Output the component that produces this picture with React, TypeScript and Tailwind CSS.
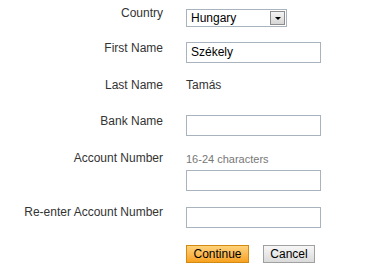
import React from 'react';

const Label: React.FC<{ children: React.ReactNode }> = ({ children }) => (
  <div className="w-[163px] shrink-0 text-right text-[12px] leading-[14px] text-[#333]">{children}</div>
);

const TextBox: React.FC<{ value?: string; className?: string }> = ({ value, className }) => (
  <div
    className={`w-[135px] h-[21px] border border-[#a9b3bd] bg-white px-[4px] text-[12px] leading-[19px] text-black ${className ?? ''}`}
  >
    {value}
  </div>
);

export default function App() {
  return (
    <div className="w-[375px] h-[278px] bg-white font-['Liberation_Sans',Arial,sans-serif]">
      <div className="flex flex-col pt-[6px]">
        {/* country */}
        <div className="flex gap-[23px]">
          <Label>Country</Label>
          <div className="mt-[3px] flex h-[18px] w-[101px] items-center justify-between border border-[#a9b3bd] bg-white pl-[4px] pr-[1px]">
            <span className="text-[12px] leading-[14px] text-black">Hungary</span>
            <span className="flex h-[14px] w-[15px] items-center justify-center border border-[#8c8c8c] bg-gradient-to-b from-[#f4f4f4] to-[#d6d6d6]">
              <span className="border-x-[3px] border-t-[3px] border-x-transparent border-t-black" />
            </span>
          </div>
        </div>

        {/* first name */}
        <div className="mt-[14px] flex gap-[23px]">
          <Label>First Name</Label>
          <TextBox value="Székely" className="mt-[1px]" />
        </div>

        {/* last name */}
        <div className="mt-[15px] flex gap-[23px]">
          <Label>Last Name</Label>
          <div className="text-[12px] leading-[14px] text-[#333]">Tamás</div>
        </div>

        {/* bank */}
        <div className="mt-[22px] flex gap-[23px]">
          <Label>Bank Name</Label>
          <TextBox className="mt-[1px]" />
        </div>

        {/* account number */}
        <div className="mt-[15px] flex gap-[23px]">
          <Label>Account Number</Label>
          <div className="flex flex-col">
            <div className="mt-[1px] text-[11px] leading-[14px] text-[#777]">16-24 characters</div>
            <TextBox className="mt-[4px]" />
          </div>
        </div>

        {/* re-enter */}
        <div className="mt-[14px] flex gap-[23px]">
          <Label>Re-enter Account Number</Label>
          <TextBox className="mt-[2px]" />
        </div>

        {/* buttons */}
        <div className="mt-[17px] flex gap-[14px] pl-[186px]">
          <button className="h-[18px] w-[63px] border border-[#d38a12] bg-gradient-to-b from-[#ffd27a] to-[#f7a21b] text-[12px] leading-[16px] text-black">
            Continue
          </button>
          <button className="h-[18px] w-[52px] border border-[#a0a0a0] bg-gradient-to-b from-[#f7f7f7] to-[#dadada] text-[12px] leading-[16px] text-black">
            Cancel
          </button>
        </div>
      </div>
    </div>
  );
}
